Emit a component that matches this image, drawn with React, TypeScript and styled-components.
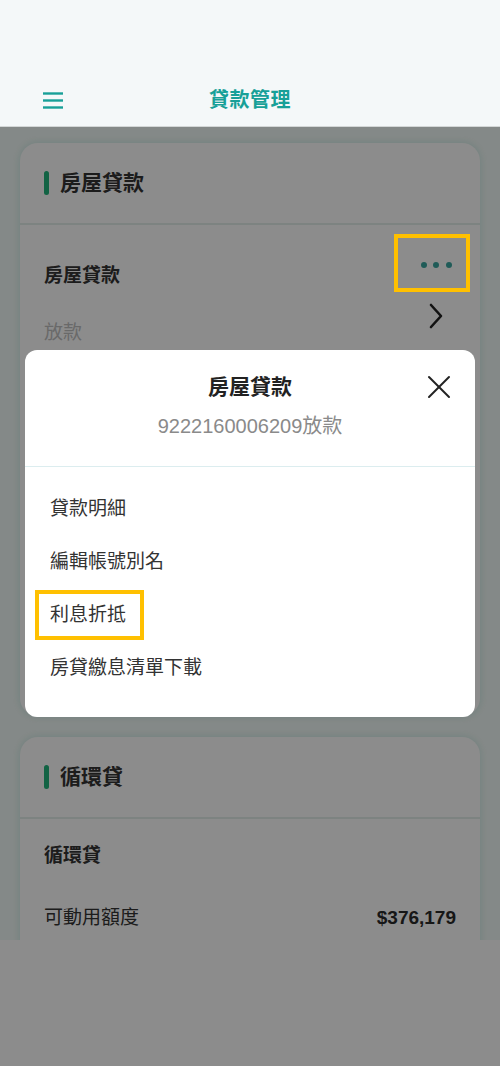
import React from "react";
import styled, { createGlobalStyle } from "styled-components";

const GlobalStyle = createGlobalStyle`
  html, body { margin: 0; padding: 0; }
  body {
    font-family: "Liberation Sans", "Noto Sans CJK TC", "Noto Sans", sans-serif;
    background: #ffffff;
    color: #333333;
  }
  * { box-sizing: border-box; }
`;

const Page = styled.div`
  width: 500px;
  height: 1066px;
  display: flex;
  flex-direction: column;
  overflow: hidden;
`;

const TopBar = styled.header`
  height: 127px;
  flex: 0 0 127px;
  padding-top: 74px;
  background: #f4f8f9;
  display: grid;
  grid-template-columns: 1fr auto 1fr;
  align-items: center;
  border-bottom: 1px solid #d3d7d7;
`;

const MenuButton = styled.div`
  padding-left: 43px;
  display: flex;
  align-items: center;
`;

const TopTitle = styled.h1`
  margin: 0;
  font-size: 20px;
  line-height: 30px;
  font-weight: 700;
  color: #17a098;
  letter-spacing: 0.5px;
`;

const Stage = styled.div`
  position: relative;
  flex: 1;
  display: flex;
  flex-direction: column;
`;

const Content = styled.main`
  height: 813px;
  flex: 0 0 813px;
  overflow: hidden;
  background: #f1f9f7;
  padding: 16px 20px 0;
  display: flex;
  flex-direction: column;
  gap: 21px;
`;

const Footer = styled.div`
  flex: 1;
  background: #ffffff;
`;

const Card = styled.section<{ $minHeight?: number }>`
  background: #ffffff;
  border-radius: 18px;
  box-shadow: 0 0 6px 1px rgba(205, 236, 230, 0.9);
  min-height: ${(p) => (p.$minHeight ? `${p.$minHeight}px` : "auto")};
  flex-shrink: 0;
`;

const CardHeader = styled.div`
  height: 82px;
  display: flex;
  align-items: center;
  gap: 11px;
  padding-left: 24px;
  border-bottom: 2px solid #e3eeec;
`;

const Bar = styled.span`
  width: 5px;
  height: 24px;
  border-radius: 3px;
  background: #22b57c;
`;

const CardTitle = styled.h2`
  margin: 0;
  font-size: 21px;
  line-height: 30px;
  font-weight: 700;
  color: #333333;
`;

const LoanRow = styled.div`
  display: flex;
  justify-content: space-between;
  padding: 37px 26px 0 24px;
`;

const LoanInfo = styled.div`
  display: flex;
  flex-direction: column;
  gap: 30px;
`;

const RowTitle = styled.div`
  font-size: 19px;
  line-height: 27px;
  font-weight: 700;
  color: #333333;
`;

const RowSub = styled.div`
  font-size: 19px;
  line-height: 27px;
  color: #c0c0c0;
`;

const Actions = styled.div`
  width: 36px;
  display: flex;
  flex-direction: column;
  align-items: center;
  gap: 35px;
`;

const Dots = styled.div`
  position: relative;
  width: 36px;
  height: 6px;
  display: flex;
  justify-content: center;
  gap: 6.5px;
  &::after {
    content: "";
    position: absolute;
    left: -24px;
    right: -16px;
    top: -28px;
    bottom: -24px;
    border: 4px solid #ffc000;
    z-index: 20;
  }
`;

const Dot = styled.span`
  width: 6px;
  height: 6px;
  border-radius: 50%;
  background: #3aa7a0;
`;

const InfoRow = styled.div<{ $top: number }>`
  display: flex;
  justify-content: space-between;
  align-items: center;
  padding: ${(p) => p.$top}px 24px 0;
`;

const Label = styled.span`
  font-size: 19px;
  line-height: 27px;
  color: #333333;
`;

const Amount = styled.span`
  font-size: 19px;
  line-height: 27px;
  font-weight: 700;
  color: #2a2a2a;
`;

const SimpleRow = styled.div`
  padding: 23px 24px 0;
`;

const Dim = styled.div`
  position: absolute;
  inset: 0;
  z-index: 10;
  background: rgba(0, 0, 0, 0.45);
  padding: 223px 25px 0;
  display: flex;
  flex-direction: column;
  align-items: stretch;
`;

const Sheet = styled.div`
  background: #ffffff;
  border-radius: 12px;
`;

const SheetHead = styled.div`
  position: relative;
  padding: 22px 0 26px;
  display: flex;
  flex-direction: column;
  align-items: center;
  gap: 10px;
  border-bottom: 1px solid #dcedef;
`;

const SheetTitle = styled.h3`
  margin: 0;
  font-size: 21px;
  line-height: 30px;
  font-weight: 700;
  color: #222222;
`;

const SheetSub = styled.div`
  font-size: 20px;
  line-height: 28px;
  color: #8a8a8a;
`;

const CloseButton = styled.button`
  position: absolute;
  top: 24px;
  right: 23px;
  width: 26px;
  height: 26px;
  padding: 0;
  border: none;
  background: transparent;
  display: flex;
  align-items: center;
  justify-content: center;
`;

const Menu = styled.ul`
  list-style: none;
  margin: 0;
  padding: 15px 0 23px;
`;

const MenuItem = styled.li`
  height: 53px;
  display: flex;
  align-items: center;
  padding-left: 25px;
`;

const ItemLabel = styled.span<{ $highlighted?: boolean }>`
  position: relative;
  font-size: 19px;
  line-height: 26px;
  color: #333333;
  &::after {
    content: "";
    display: ${(p) => (p.$highlighted ? "block" : "none")};
    position: absolute;
    left: -15px;
    right: -18px;
    top: -12px;
    bottom: -12px;
    border: 4px solid #ffc000;
  }
`;

const Hamburger = () => (
  <svg width="20" height="17" viewBox="0 0 20 17">
    <g stroke="#17a098" strokeWidth="2.4" strokeLinecap="butt">
      <line x1="0" y1="1.5" x2="20" y2="1.5" />
      <line x1="0" y1="8.5" x2="20" y2="8.5" />
      <line x1="0" y1="15.5" x2="20" y2="15.5" />
    </g>
  </svg>
);

const Chevron = () => (
  <svg width="14" height="26" viewBox="0 0 14 26">
    <polyline
      points="2,2 12,13 2,24"
      fill="none"
      stroke="#222222"
      strokeWidth="2.6"
      strokeLinecap="round"
      strokeLinejoin="round"
    />
  </svg>
);

const CloseIcon = () => (
  <svg width="24" height="24" viewBox="0 0 24 24">
    <g stroke="#222222" strokeWidth="2" strokeLinecap="round">
      <line x1="2" y1="2" x2="22" y2="22" />
      <line x1="22" y1="2" x2="2" y2="22" />
    </g>
  </svg>
);

const menuItems = ["貸款明細", "編輯帳號別名", "利息折抵", "房貸繳息清單下載"];

export default function App() {
  return (
    <>
      <GlobalStyle />
      <Page>
        <TopBar>
          <MenuButton>
            <Hamburger />
          </MenuButton>
          <TopTitle>貸款管理</TopTitle>
          <div />
        </TopBar>
        <Stage>
          <Content>
            <Card $minHeight={573}>
              <CardHeader>
                <Bar />
                <CardTitle>房屋貸款</CardTitle>
              </CardHeader>
              <LoanRow>
                <LoanInfo>
                  <RowTitle>房屋貸款</RowTitle>
                  <RowSub>放款</RowSub>
                </LoanInfo>
                <Actions>
                  <Dots>
                    <Dot />
                    <Dot />
                    <Dot />
                  </Dots>
                  <Chevron />
                </Actions>
              </LoanRow>
              <InfoRow $top={35}>
                <Label>貸款餘額</Label>
                <Amount>$2,316,540</Amount>
              </InfoRow>
              <InfoRow $top={35}>
                <Label>本期應繳金額</Label>
                <Amount>$12,846</Amount>
              </InfoRow>
            </Card>
            <Card $minHeight={320}>
              <CardHeader>
                <Bar />
                <CardTitle>循環貸</CardTitle>
              </CardHeader>
              <SimpleRow>
                <RowTitle>循環貸</RowTitle>
              </SimpleRow>
              <InfoRow $top={35}>
                <Label>可動用額度</Label>
                <Amount>$376,179</Amount>
              </InfoRow>
            </Card>
          </Content>
          <Footer />
          <Dim>
            <Sheet>
              <SheetHead>
                <SheetTitle>房屋貸款</SheetTitle>
                <SheetSub>9222160006209放款</SheetSub>
                <CloseButton aria-label="關閉">
                  <CloseIcon />
                </CloseButton>
              </SheetHead>
              <Menu>
                {menuItems.map((item) => (
                  <MenuItem key={item}>
                    <ItemLabel $highlighted={item === "利息折抵"}>{item}</ItemLabel>
                  </MenuItem>
                ))}
              </Menu>
            </Sheet>
          </Dim>
        </Stage>
      </Page>
    </>
  );
}
